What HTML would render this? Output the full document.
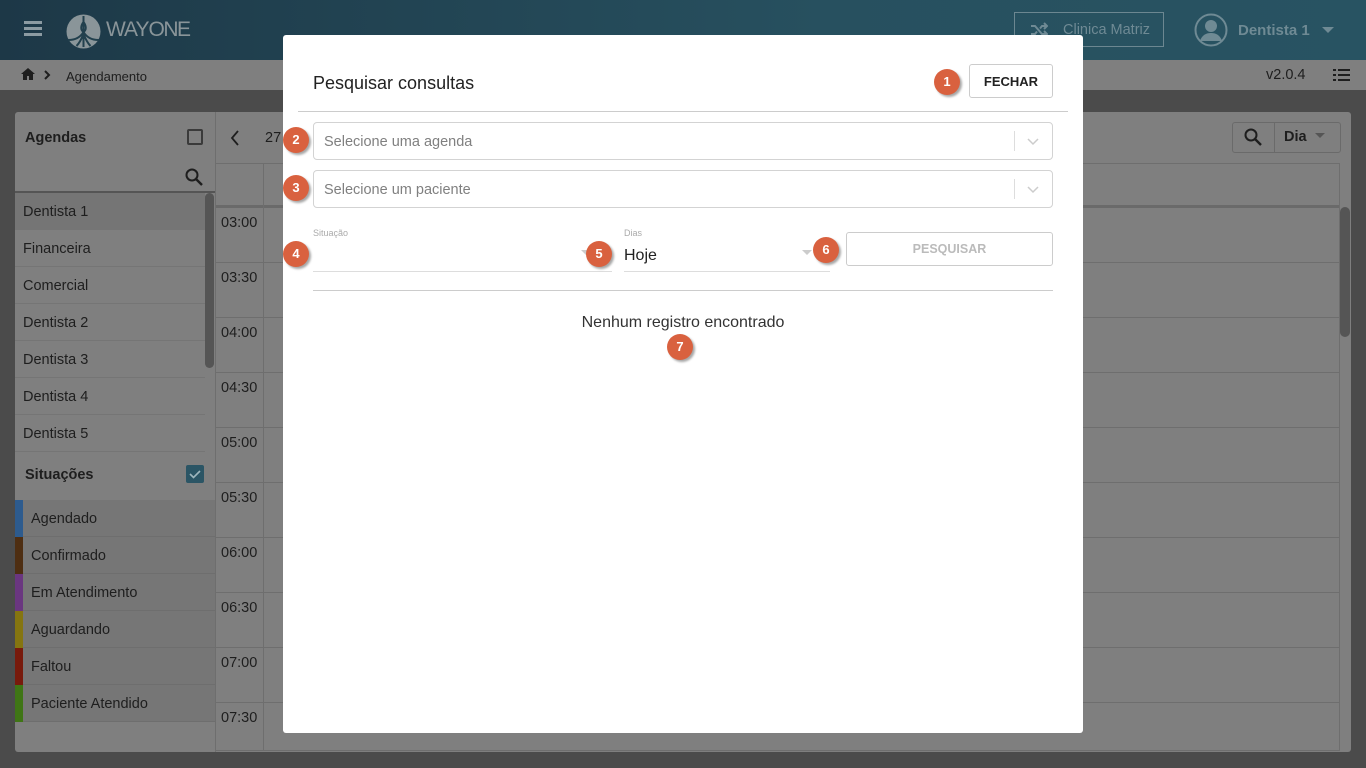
<!DOCTYPE html>
<html><head><meta charset="utf-8"><style>
*{box-sizing:border-box;margin:0;padding:0}
body{width:1366px;height:768px;overflow:hidden;background:#4b4b4b;font-family:"Liberation Sans",Roboto,sans-serif;position:relative;color:#1a1a1a}
.a{position:absolute}
.hdr{left:0;top:0;width:1366px;height:60px;background:linear-gradient(90deg,#1d3847,#27505f 60%,#285362)}
.bc{left:0;top:60px;width:1366px;height:30px;background:#7f7f7f;font-size:13px}
.panel{left:15px;top:112px;width:1336px;height:640px;background:#7f7f7f;border-radius:3px}
.row{position:absolute;left:15px;width:190px;height:37px;border-bottom:1px solid #757575;font-size:14.5px;line-height:39px;padding-left:8px;color:#1e1e1e}
.srow{position:absolute;left:15px;width:200px;height:37px;background:#767676;border-bottom:1px solid #6e6e6e;font-size:14.5px;line-height:39px;padding-left:16px;color:#1e1e1e}
.bar{position:absolute;left:0;top:0;width:8px;height:37px}
.t{position:absolute;left:221px;font-size:14.5px;color:#1e1e1e}
.hl{position:absolute;left:216px;width:1124px;height:1px;background:#6e6e6e}
.modal{left:283px;top:35px;width:800px;height:698px;background:#fff;border-radius:3px}
.badge{position:absolute;width:26px;height:26px;border-radius:50%;background:#d9613f;color:#fff;font-weight:bold;font-size:13px;text-align:center;line-height:26px;box-shadow:2px 2px 2px rgba(0,0,0,.35)}
.sel{position:absolute;left:30px;width:740px;height:38px;border:1px solid #d3d3d3;border-radius:4px;font-size:14.5px;color:#808080;line-height:38px;padding-left:10px}
.sel .sep{position:absolute;right:37px;top:8px;width:1px;height:20px;background:#ddd}
.sel .chev{position:absolute;right:12px;top:9px}
</style></head><body>
<div class="a hdr">
 <div class="a" style="left:24px;top:21px;width:18px;height:3px;background:#8c9ba2;box-shadow:0 6px 0 #8c9ba2,0 12px 0 #8c9ba2"></div>
 <svg class="a" style="left:66px;top:14px" width="35" height="35" viewBox="0 0 35 35"><circle cx="17.5" cy="17.5" r="17" fill="#8a9599"/><path d="M17.5 2v31M17.5 18c-3 5-8 8-15 8M17.5 18c3 5 8 8 15 8M17.5 20c-2 5-4 9-7 12M17.5 20c2 5 4 9 7 12M17.5 8c-3 4-3 8 0 10M17.5 8c3 4 3 8 0 10" stroke="#22404d" stroke-width="2" fill="none"/></svg>
 <div class="a" style="left:106px;top:18px;font-size:21px;color:#8a9599;letter-spacing:-1px">WAY<span style="font-weight:300;letter-spacing:-1.5px">ONE</span></div>
 <div class="a" style="left:1014px;top:12px;width:150px;height:35px;border:1px solid #6c8791;color:#6f8a94;font-size:14.5px;line-height:35px;padding-left:48px">Clinica Matriz</div>
 <svg class="a" style="left:1030px;top:22px" width="18" height="16" viewBox="0 0 18 16"><path d="M1 4h4l7 8h4M1 12h4l2-2.5M10 6.5 12 4h4M14 1l3 3-3 3M14 9l3 3-3 3" stroke="#6f8a94" stroke-width="2" fill="none"/></svg>
 <svg class="a" style="left:1194px;top:13px" width="34" height="34" viewBox="0 0 34 34"><circle cx="17" cy="17" r="15.5" fill="none" stroke="#6f8a94" stroke-width="2"/><circle cx="17" cy="13" r="6" fill="#6f8a94"/><path d="M6 28c2-6 6-8 11-8s9 2 11 8" fill="#6f8a94"/></svg>
 <div class="a" style="left:1238px;top:22px;font-size:15px;color:#6f8a94;font-weight:bold">Dentista 1</div>
 <div class="a" style="left:1322px;top:27px;border:6px solid transparent;border-top:6px solid #6f8a94"></div>
</div>
<div class="a bc">
 <svg class="a" style="left:21px;top:8px" width="14" height="12" viewBox="0 0 14 12"><path d="M7 0 0 6h2v6h4V8h2v4h4V6h2z" fill="#1e1e1e"/></svg>
 <svg class="a" style="left:43px;top:10px" width="8" height="10" viewBox="0 0 8 10"><path d="M2 1l4 4-4 4" stroke="#1e1e1e" stroke-width="2" fill="none"/></svg>
 <div class="a" style="left:66px;top:9px;color:#1e1e1e">Agendamento</div>
 <div class="a" style="left:1266px;top:7px;font-size:14.5px;color:#1e1e1e">v2.0.4</div>
 <svg class="a" style="left:1333px;top:8px" width="17" height="14" viewBox="0 0 17 14"><path d="M0 1h3v2H0zM0 6h3v2H0zM0 11h3v2H0zM5 1h12v2H5zM5 6h12v2H5zM5 11h12v2H5z" fill="#1e1e1e"/></svg>
</div>
<div class="a panel"></div>
<div class="a" style="left:25px;top:130px;font-size:14.5px;font-weight:bold;color:#1e1e1e">Agendas</div>
<div class="a" style="left:187px;top:129px;width:16px;height:16px;border:2px solid #3a3a3a;border-radius:2px"></div>
<svg class="a" style="left:185px;top:168px" width="18" height="18" viewBox="0 0 18 18"><circle cx="7" cy="7" r="5.5" stroke="#1e1e1e" stroke-width="2" fill="none"/><path d="M11 11l6 6" stroke="#1e1e1e" stroke-width="2.4"/></svg>
<div class="a" style="left:15px;top:191px;width:200px;height:2px;background:#555"></div>
<div class="row" style="top:193px;background:#757575">Dentista 1</div>
<div class="row" style="top:230px">Financeira</div>
<div class="row" style="top:267px">Comercial</div>
<div class="row" style="top:304px">Dentista 2</div>
<div class="row" style="top:341px">Dentista 3</div>
<div class="row" style="top:378px">Dentista 4</div>
<div class="row" style="top:415px">Dentista 5</div>
<div class="a" style="left:205px;top:193px;width:9px;height:175px;background:#555;border-radius:5px"></div>
<div class="a" style="left:25px;top:467px;font-size:14.5px;font-weight:bold;color:#1e1e1e">Situações</div>
<div class="a" style="left:186px;top:465px;width:18px;height:18px;background:#2b5565;border-radius:2px"><svg width="18" height="18" viewBox="0 0 18 18"><path d="M4 9l3.5 3.5L14 6" stroke="#9fb6bd" stroke-width="1.6" fill="none"/></svg></div>
<div class="srow" style="top:500px"><div class="bar" style="background:#2d5b8e"></div>Agendado</div>
<div class="srow" style="top:537px"><div class="bar" style="background:#4e2e12"></div>Confirmado</div>
<div class="srow" style="top:574px"><div class="bar" style="background:#6a3680"></div>Em Atendimento</div>
<div class="srow" style="top:611px"><div class="bar" style="background:#857510"></div>Aguardando</div>
<div class="srow" style="top:648px"><div class="bar" style="background:#781a0c"></div>Faltou</div>
<div class="srow" style="top:685px"><div class="bar" style="background:#3f7515"></div>Paciente Atendido</div>
<div class="a" style="left:215px;top:112px;width:1px;height:640px;background:#6e6e6e"></div>
<svg class="a" style="left:229px;top:129px" width="12" height="18" viewBox="0 0 12 18"><path d="M9 2 3 9l6 7" stroke="#1e1e1e" stroke-width="1.8" fill="none"/></svg>
<div class="a" style="left:265px;top:130px;font-size:14.5px;color:#1e1e1e">27</div>
<div class="a" style="left:1232px;top:122px;width:109px;height:31px;border:1px solid #6a6a6a;border-radius:3px"></div>
<div class="a" style="left:1274px;top:122px;width:1px;height:31px;background:#6a6a6a"></div>
<svg class="a" style="left:1244px;top:128px" width="18" height="18" viewBox="0 0 18 18"><circle cx="7" cy="7" r="5.5" stroke="#1e1e1e" stroke-width="2" fill="none"/><path d="M11 11l6 6" stroke="#1e1e1e" stroke-width="2.4"/></svg>
<div class="a" style="left:1284px;top:129px;font-size:14.5px;font-weight:bold;color:#1e1e1e">Dia</div>
<div class="a" style="left:1315px;top:133px;border:5px solid transparent;border-top:5px solid #555"></div>
<div class="hl" style="top:163px"></div>
<div class="a" style="left:216px;top:205px;width:1124px;height:3px;background:#6a6a6a"></div>
<div class="a" style="left:263px;top:163px;width:1px;height:587px;background:#6e6e6e"></div>
<div class="a" style="left:1339px;top:163px;width:1px;height:587px;background:#6e6e6e"></div>
<div class="a" style="left:1340px;top:207px;width:10px;height:130px;background:#555;border-radius:5px"></div>
<div class="hl" style="top:262px"></div><div class="hl" style="top:317px"></div><div class="hl" style="top:372px"></div><div class="hl" style="top:427px"></div><div class="hl" style="top:482px"></div><div class="hl" style="top:537px"></div><div class="hl" style="top:592px"></div><div class="hl" style="top:647px"></div><div class="hl" style="top:702px"></div><div class="hl" style="top:750px"></div>
<div class="t" style="top:215px">03:00</div><div class="t" style="top:270px">03:30</div><div class="t" style="top:325px">04:00</div><div class="t" style="top:380px">04:30</div><div class="t" style="top:435px">05:00</div><div class="t" style="top:490px">05:30</div><div class="t" style="top:545px">06:00</div><div class="t" style="top:600px">06:30</div><div class="t" style="top:655px">07:00</div><div class="t" style="top:710px">07:30</div>

<div class="a modal">
 <div class="a" style="left:30px;top:38px;font-size:18px;color:#222">Pesquisar consultas</div>
 <div class="badge" style="left:651px;top:34px">1</div>
 <div class="a" style="left:686px;top:29px;width:84px;height:34px;border:1px solid #ccc;border-radius:3px;font-size:13px;font-weight:bold;color:#222;text-align:center;line-height:33px">FECHAR</div>
 <div class="a" style="left:15px;top:76px;width:770px;height:1px;background:#ccc"></div>
 <div class="sel" style="top:87px">Selecione uma agenda<div class="sep"></div><svg class="chev" width="14" height="18" viewBox="0 0 14 18"><path d="M2 7l5 5 5-5" stroke="#ccc" stroke-width="1.5" fill="none"/></svg></div>
 <div class="badge" style="left:0;top:92px">2</div>
 <div class="sel" style="top:135px">Selecione um paciente<div class="sep"></div><svg class="chev" width="14" height="18" viewBox="0 0 14 18"><path d="M2 7l5 5 5-5" stroke="#ccc" stroke-width="1.5" fill="none"/></svg></div>
 <div class="badge" style="left:0;top:140px">3</div>
 <div class="a" style="left:30px;top:193px;font-size:9px;color:#aaa">Situação</div>
 <div class="a" style="left:30px;top:236px;width:299px;height:1px;background:#ddd"></div>
 <div class="a" style="left:298px;top:215px;border:5px solid transparent;border-top:5px solid #ccc"></div>
 <div class="badge" style="left:0;top:206px">4</div>
 <div class="a" style="left:341px;top:193px;font-size:9px;color:#aaa">Dias</div>
 <div class="a" style="left:341px;top:212px;font-size:16px;color:#222">Hoje</div>
 <div class="a" style="left:341px;top:236px;width:206px;height:1px;background:#ddd"></div>
 <div class="a" style="left:519px;top:215px;border:5px solid transparent;border-top:5px solid #ccc"></div>
 <div class="badge" style="left:303px;top:206px">5</div>
 <div class="badge" style="left:530px;top:202px">6</div>
 <div class="a" style="left:563px;top:197px;width:207px;height:34px;border:1px solid #ccc;border-radius:3px;font-size:12.5px;font-weight:bold;color:#bbb;text-align:center;line-height:33px">PESQUISAR</div>
 <div class="a" style="left:30px;top:255px;width:740px;height:1px;background:#ccc"></div>
 <div class="a" style="left:0;top:279px;width:800px;text-align:center;font-size:16px;color:#333">Nenhum registro encontrado</div>
 <div class="badge" style="left:384px;top:299px">7</div>
</div>
</body></html>
